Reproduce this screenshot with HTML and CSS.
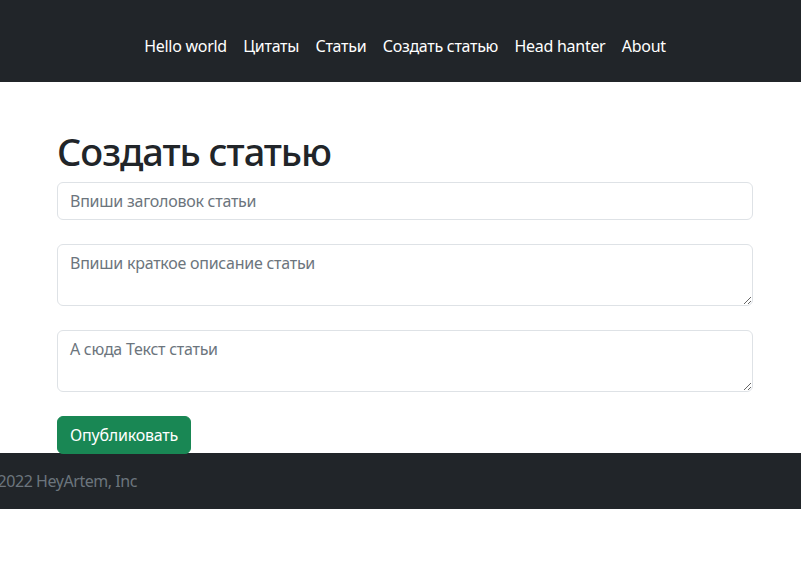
FILE: index.html
```html
<!DOCTYPE html>
<html lang="ru">
<head>
<meta charset="utf-8">
<title>Создать статью</title>
<link rel="stylesheet" href="styles.css">
</head>
<body>
<header class="topbar">
  <nav class="nav">
    <a class="nav-link" href="#">Hello world</a>
    <a class="nav-link" href="#">Цитаты</a>
    <a class="nav-link" href="#">Статьи</a>
    <a class="nav-link" href="#">Создать статью</a>
    <a class="nav-link" href="#">Head hanter</a>
    <a class="nav-link" href="#">About</a>
  </nav>
</header>
<main class="container">
  <h1 class="title">Создать статью</h1>
  <form class="form">
    <input class="field" type="text" placeholder="Впиши заголовок статьи">
    <textarea class="field area" placeholder="Впиши краткое описание статьи"></textarea>
    <textarea class="field area" placeholder="А сюда Текст статьи"></textarea>
    <button class="btn" type="button">Опубликовать</button>
  </form>
</main>
<footer class="footer">
  <p class="copy">© 2022 HeyArtem, Inc</p>
</footer>
</body>
</html>
```
FILE: styles.css
```css
* { box-sizing: border-box; }
html, body { margin: 0; padding: 0; }
body {
  font-family: "Noto Sans", "Open Sans", sans-serif;
  font-size: 16px;
  color: #212529;
  background: #fff;
  width: 810px;
  overflow: hidden;
}
.topbar {
  background: #212529;
  height: 82px;
  display: flex;
  align-items: flex-start;
  justify-content: center;
  padding-top: 26px;
}
.nav {
  display: flex;
}
.nav-link {
  color: #fff;
  text-decoration: none;
  padding: 8px 8.2px;
  line-height: 24px;
  font-size: 16px;
  letter-spacing: -0.28px;
}
.container {
  width: 696px;
  margin: 0 auto;
}
.title {
  font-size: 38px;
  font-weight: 500;
  line-height: 48px;
  margin: 45px 0 7px;
  letter-spacing: -1.05px;
}
.form {
  display: flex;
  flex-direction: column;
  align-items: flex-start;
  gap: 24px;
}
.field {
  width: 100%;
  display: block;
  font-family: inherit;
  font-size: 16px;
  line-height: 24px;
  letter-spacing: -0.25px;
  padding: 6px 12px;
  border: 1px solid #dee2e6;
  border-radius: 6px;
  color: #212529;
  background: #fff;
  height: 38px;
}
.field::placeholder { color: #6c757d; opacity: 1; }
.area { height: 62px; resize: vertical; }
.btn {
  font-family: inherit;
  font-size: 16px;
  line-height: 24px;
  letter-spacing: -0.2px;
  padding: 6px 12px;
  width: 134px;
  height: 38px;
  margin-bottom: -1px;
  color: #fff;
  background: #198754;
  border: 1px solid #198754;
  border-radius: 6px;
}
.footer {
  background: #212529;
  height: 56px;
  display: flex;
  align-items: center;
}
.copy {
  margin: 0 0 0 -19px;
  color: #6c757d;
  line-height: 24px;
  letter-spacing: -0.45px;
}
```
